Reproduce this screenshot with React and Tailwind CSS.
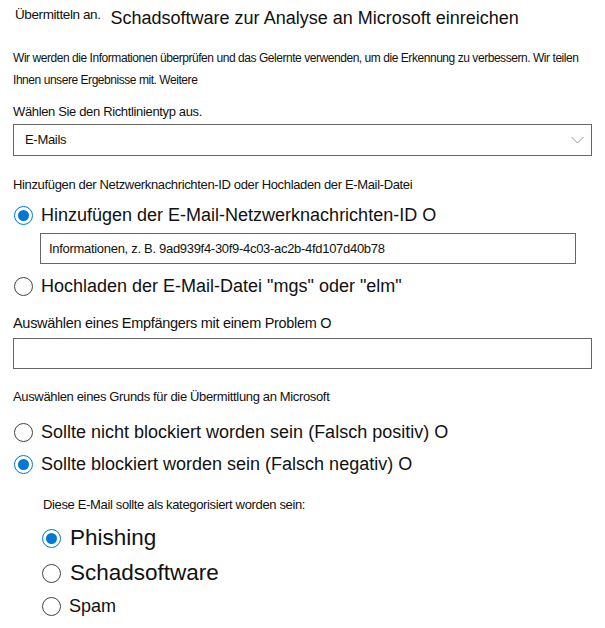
import React from "react";

function Radio({ checked, size = 19 }) {
  return (
    <span
      className={`inline-flex shrink-0 items-center justify-center rounded-full border bg-white ${checked ? "border-[#0078d4]" : "border-[#444]"}`}
      style={{ width: size, height: size }}
    >
      {checked && <span className="rounded-full bg-[#0078d4]" style={{ width: size - 8, height: size - 8 }} />}
    </span>
  );
}

export default function App() {
  return (
    <div className="w-[605px] h-[628px] bg-white text-[#111] font-['Liberation_Sans',Arial,sans-serif] overflow-hidden">
      <div className="flex items-start pl-[15px] pt-[6px] h-[30px]">
        <span className="mt-[1px] text-[13.5px] tracking-[-0.4px] leading-[16px]">Übermitteln an.</span>
        <span className="ml-[10px] text-[18px] leading-[24px]">Schadsoftware zur Analyse an Microsoft einreichen</span>
      </div>

      <div className="px-[13px] mt-[17px] text-[12px] tracking-[-0.45px] leading-[22px]">
        Wir werden die Informationen überprüfen und das Gelernte verwenden, um die Erkennung zu verbessern. Wir teilen Ihnen unsere Ergebnisse mit. Weitere
      </div>

      <div className="px-[13px] mt-[13px] text-[13px] tracking-[-0.35px] leading-[16px]">Wählen Sie den Richtlinientyp aus.</div>

      <div className="mx-[13px] mt-[4px] h-[32px] border border-[#666] flex items-center justify-between pl-[11px] pr-[7px]">
        <span className="text-[13px] tracking-[-0.3px]">E-Mails</span>
        <svg width="13" height="8" viewBox="0 0 13 8" fill="none" stroke="#999" strokeWidth="1">
          <path d="M0.5 1 L6.5 7 L12.5 1" />
        </svg>
      </div>

      <div className="px-[13px] mt-[21px] text-[13px] tracking-[-0.35px] leading-[16px]">Hinzufügen der Netzwerknachrichten-ID oder Hochladen der E-Mail-Datei</div>

      <div className="flex items-center gap-[8px] pl-[14px] mt-[10px] h-[24px]">
        <Radio checked />
        <span className="text-[18px] leading-[24px]">Hinzufügen der E-Mail-Netzwerknachrichten-ID O</span>
      </div>

      <div className="ml-[40px] mr-[29px] mt-[6px] h-[31px] border border-[#666] flex items-center pl-[8px]">
        <span className="text-[13px] tracking-[-0.3px]">Informationen, z. B. 9ad939f4-30f9-4c03-ac2b-4fd107d40b78</span>
      </div>

      <div className="flex items-center gap-[8px] pl-[14px] mt-[10px] h-[24px]">
        <Radio />
        <span className="text-[18px] leading-[24px]">Hochladen der E-Mail-Datei "mgs" oder "elm"</span>
      </div>

      <div className="px-[13px] mt-[17px] text-[14.5px] tracking-[-0.3px] leading-[16px]">Auswählen eines Empfängers mit einem Problem O</div>

      <div className="mx-[13px] mt-[7px] h-[31px] border border-[#666]" />

      <div className="px-[13px] mt-[20px] text-[13px] tracking-[-0.35px] leading-[16px]">Auswählen eines Grunds für die Übermittlung an Microsoft</div>

      <div className="flex items-center gap-[8px] pl-[14px] mt-[15px] h-[24px]">
        <Radio />
        <span className="text-[18px] leading-[24px]">Sollte nicht blockiert worden sein (Falsch positiv) O</span>
      </div>

      <div className="flex items-center gap-[8px] pl-[14px] mt-[8px] h-[24px]">
        <Radio checked />
        <span className="text-[18px] leading-[24px]">Sollte blockiert worden sein (Falsch negativ) O</span>
      </div>

      <div className="pl-[43px] mt-[21px] text-[13px] tracking-[-0.35px] leading-[16px]">Diese E-Mail sollte als kategorisiert worden sein:</div>

      <div className="flex items-center gap-[9px] pl-[42px] mt-[11px] h-[28px]">
        <Radio checked />
        <span className="text-[22.5px] leading-[28px]">Phishing</span>
      </div>

      <div className="flex items-center gap-[9px] pl-[42px] mt-[7px] h-[28px]">
        <Radio />
        <span className="text-[22.5px] leading-[28px]">Schadsoftware</span>
      </div>

      <div className="flex items-center gap-[8px] pl-[42px] mt-[7px] h-[24px]">
        <Radio />
        <span className="text-[18px] leading-[24px]">Spam</span>
      </div>
    </div>
  );
}
